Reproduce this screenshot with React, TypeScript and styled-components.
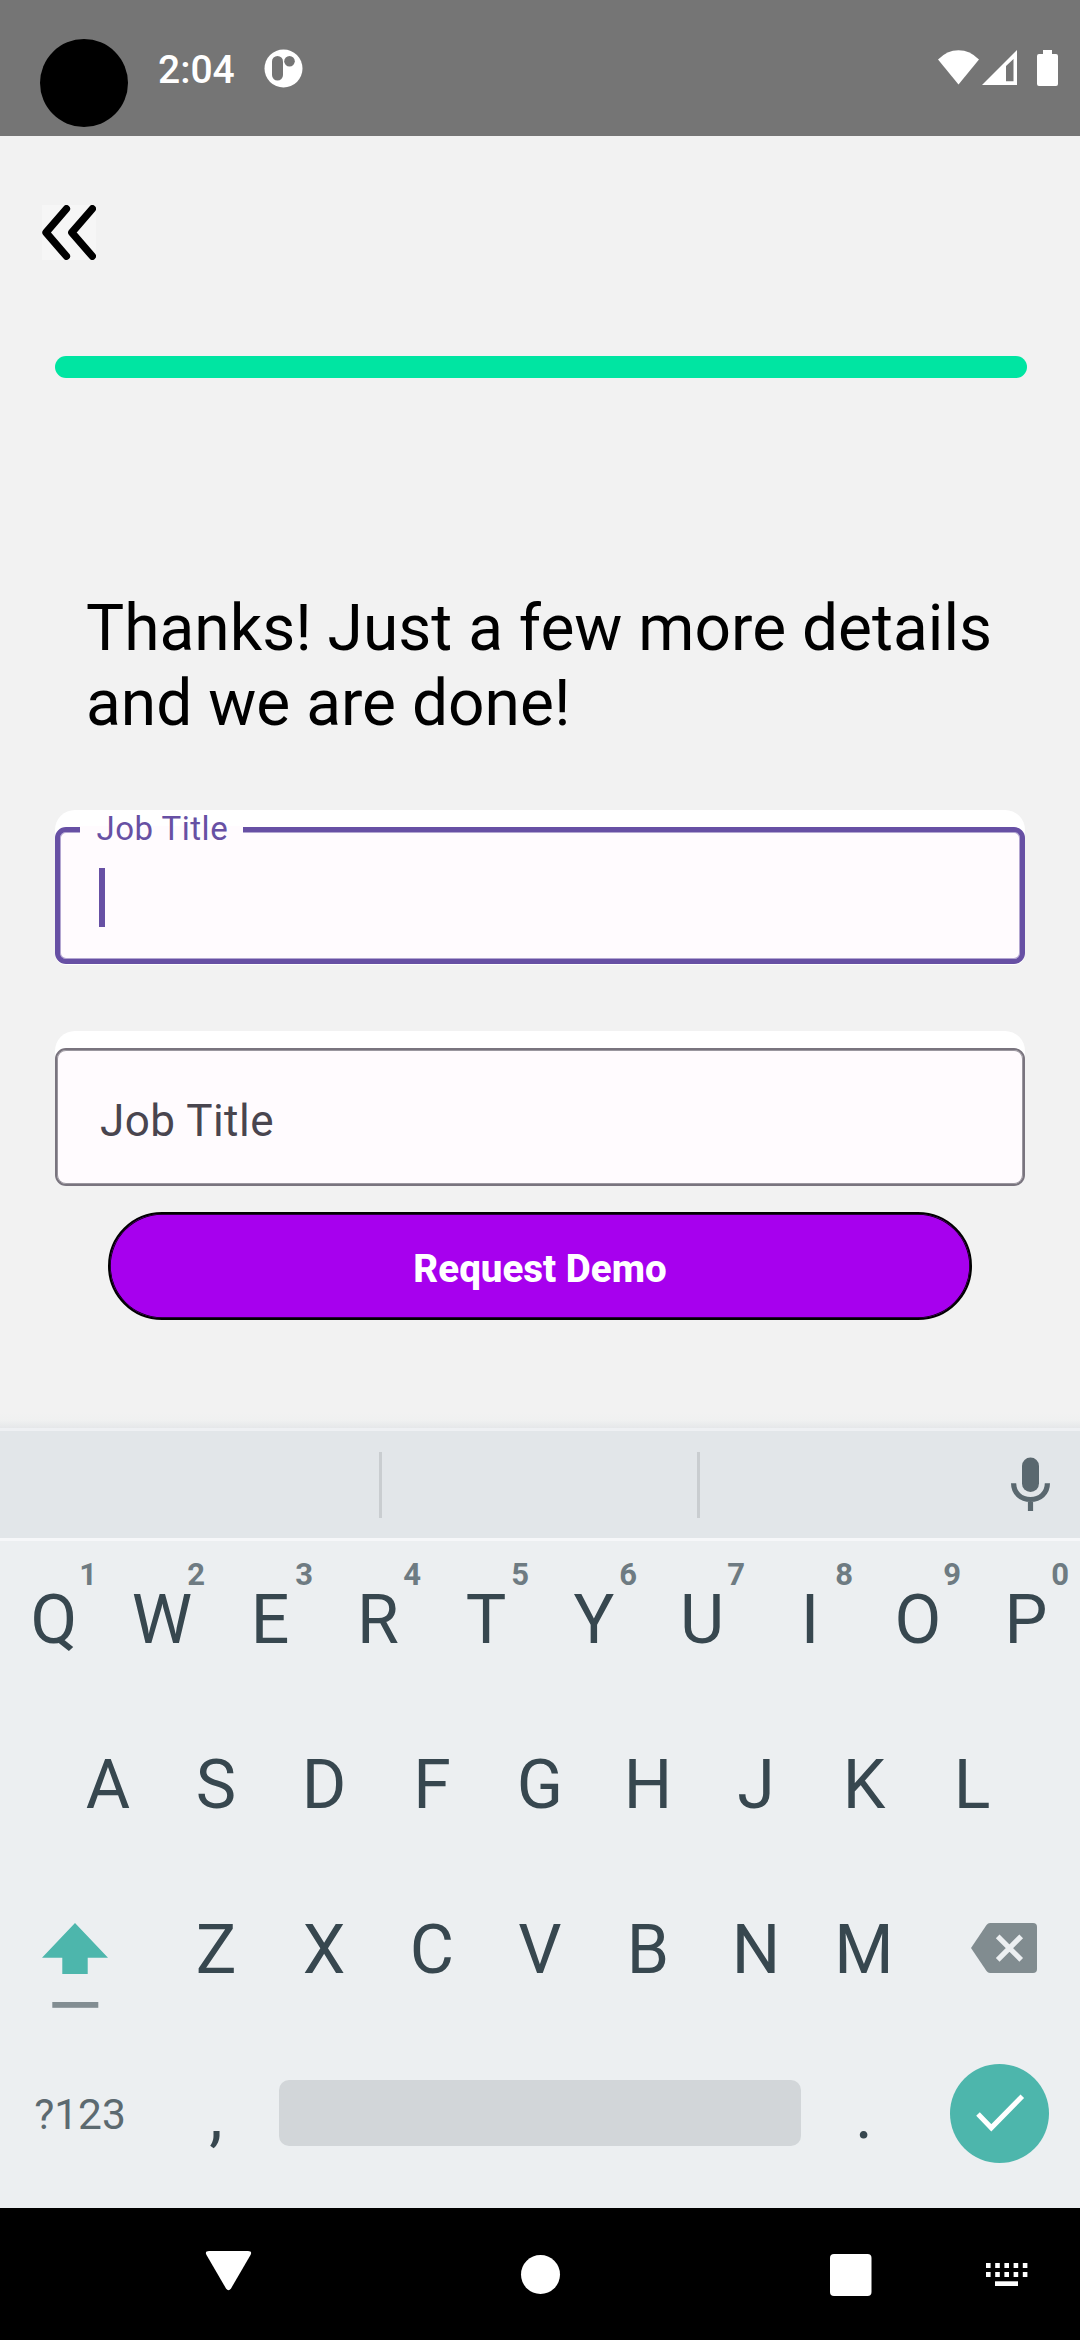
import React from "react";
import styled, { createGlobalStyle } from "styled-components";

const GlobalStyle = createGlobalStyle`
  *, *::before, *::after { box-sizing: border-box; }
  body { margin: 0; background: #f2f2f2; }
  svg { display: block; flex: none; }
`;

const Screen = styled.div`
  display: flex;
  flex-direction: column;
  width: 1080px;
  height: 2340px;
  overflow: hidden;
  background: #f2f2f2;
  color: #000;
  font-family: Roboto, "Noto Sans", sans-serif;
`;

const StatusBar = styled.header`
  display: flex;
  align-items: flex-start;
  height: 136px;
  padding: 39px 22px 0 40px;
  background: #757575;
`;

const Camera = styled.div`
  width: 88px;
  height: 88px;
  border-radius: 50%;
  background: #000;
`;

const Clock = styled.time`
  width: 77px;
  margin: 7px 0 0 30px;
  color: #fff;
  font-size: 39px;
  font-weight: 500;
  line-height: 48px;
  white-space: nowrap;
`;

const AppBadge = styled.svg`
  margin: 10px 0 0 29px;
`;

const StatusIcons = styled.div`
  display: flex;
  margin: 11px 0 0 auto;
`;

const Main = styled.main`
  display: flex;
  flex-direction: column;
  height: 1276px;
  padding: 69px 55px 0;
`;

const BackButton = styled.button`
  width: 54px;
  height: 55px;
  margin-left: -13px;
  padding: 0;
  border: 0;
  background: #f6f6f6;
`;

const Progress = styled.div`
  width: 972px;
  height: 22px;
  margin-top: 96px;
  border-radius: 11px;
  background: #00e5a2;
`;

const Heading = styled.h1`
  margin: 213px -20px 0 31px;
  font-size: 64px;
  font-weight: 400;
  line-height: 75px;
  letter-spacing: 0.02px;
`;

const Field = styled.label<{ $gap: number }>`
  display: block;
  position: relative;
  height: 155px;
  margin-top: ${(p) => p.$gap}px;
  padding-top: 17px;
  border-radius: 20px 20px 11px 11px;
  background: #fff;
`;

const Outline = styled.div<{ $focused?: boolean }>`
  display: flex;
  align-items: center;
  height: ${(p) => (p.$focused ? 137 : 138)}px;
  padding-left: ${(p) => (p.$focused ? 39 : 43)}px;
  border: ${(p) => (p.$focused ? "5px solid #6750a4" : "2px solid #79747e")};
  border-radius: 11px;
  background: #fffbfe;
  box-shadow: inset 0 0 0 1px ${(p) => (p.$focused ? "#b3a6d1" : "#9b979f")};
`;

const FloatingLabel = styled.span`
  position: absolute;
  top: 16px;
  left: 25px;
  width: 163px;
  height: 7px;
  padding-left: 16.500px;
  background: #fffbfe;
  color: #6750a4;
  font-size: 33px;
  line-height: 38px;
  letter-spacing: 0.5px;
  white-space: nowrap;

  span {
    display: block;
    margin-top: -16px;
  }
`;

const Caret = styled.div`
  width: 6px;
  height: 59px;
  margin-top: 4px;
  background: #6750a4;
`;

const Placeholder = styled.span`
  padding-top: 8px;
  color: #49454f;
  font-size: 44px;
  letter-spacing: 0.5px;
`;

const SubmitButton = styled.button`
  width: 864px;
  height: 108px;
  margin: 26px 0 0 53px;
  padding: 6px 0 0;
  border: 2px solid #000;
  border-radius: 54px;
  background: #a700ee;
  box-shadow: inset 0 0 0 0.75px #000;
  color: #fff;
  font: 800 38.5px/46px Roboto, sans-serif;
`;

const Keyboard = styled.section`
  display: flex;
  flex-direction: column;
  height: 796px;
  background: #eceff1;
`;

const Shade = styled.div`
  height: 16px;
  background: linear-gradient(#f2f2f2, #f0f1f1 50%, #e5e7e9);
`;

const Suggestions = styled.div`
  display: flex;
  align-items: center;
  height: 113px;
  border-top: 3px solid #eef0f3;
  border-bottom: 3px solid #f6f7f9;
  background: #e2e6e9;
`;

const Suggestion = styled.div<{ $width: number }>`
  width: ${(p) => p.$width}px;
  height: 66px;
  border-right: 3px solid #c9cdd0;
`;

const MicButton = styled.div`
  margin-left: 311px;
  padding-bottom: 2px;
`;

const KeyRow = styled.div`
  display: flex;
  justify-content: center;
  height: 165px;
  padding-bottom: 7px;
`;

const Key = styled.div<{ $wide?: boolean }>`
  position: relative;
  display: flex;
  align-items: center;
  justify-content: center;
  width: ${(p) => (p.$wide ? 162 : 108)}px;
  color: #37474f;
  font-size: 68px;
  line-height: 80px;
`;

const Hint = styled.sup`
  position: absolute;
  top: 16px;
  right: 11px;
  color: #6e7b82;
  font-size: 31px;
  font-weight: 700;
  line-height: 36px;
`;

const SymbolsKey = styled(Key)`
  padding: 0 2px 1px 0;
  color: #5c6a70;
  font-size: 42.5px;
`;

const PunctuationKey = styled(Key)`
  font-size: 68px;
`;

const SpaceBar = styled.div`
  width: 522px;
  height: 66px;
  margin: 44px 9px 0;
  border-radius: 10px;
  background: #d2d6d9;
`;

const EnterKey = styled(Key)`
  padding-bottom: 3px;
`;

const NavBar = styled.nav`
  height: 132px;
  background: #000;
`;

const HINTED = "QWERTYUIOP".split("").map((letter, i) => ({ letter, hint: (i + 1) % 10 }));

export default function App() {
  return (
    <>
      <GlobalStyle />
      <Screen>
        <StatusBar>
          <Camera />
          <Clock>2:04</Clock>
          <AppBadge width="39" height="39" viewBox="0 0 39 39">
            <circle cx="19.5" cy="19.5" r="19" fill="#fff" />
            <rect x="8" y="7" width="11" height="24.5" rx="5.5" fill="#757575" />
            <circle cx="25.5" cy="12.3" r="5.3" fill="#757575" />
          </AppBadge>
          <StatusIcons>
            <svg width="120" height="37" viewBox="938 50 120 37" fill="#fff">
              <path d="M938 59.5Q947 50.2 958.5 50.2T979 59.5L958.5 84.5Z" />
              <path fillRule="evenodd" d="M982 85L1017 50V85ZM1006 81.2H1013.5V59L1006 66Z" />
              <path d="M1043 50H1052V54H1056Q1058 54 1058 56V84Q1058 86 1056 86H1039Q1037 86 1037 84V56Q1037 54 1039 54H1043Z" />
            </svg>
          </StatusIcons>
        </StatusBar>

        <Main>
          <BackButton aria-label="Back">
            <svg width="54" height="55" viewBox="0 0 54 55" fill="none" stroke="#000" strokeWidth="7.4" strokeLinecap="round" strokeLinejoin="round">
              <path d="M24.4 3.8L4 27.5L24.4 51.2" />
              <path d="M50.3 3.8L29.8 27.5L50.3 51.2" />
            </svg>
          </BackButton>
          <Progress />
          <Heading>
            Thanks! Just a few more details
            <br />
            and we are done!
          </Heading>
          <Field $gap={69}>
            <Outline $focused>
              <Caret />
            </Outline>
            <FloatingLabel>
              <span>Job Title</span>
            </FloatingLabel>
          </Field>
          <Field $gap={66}>
            <Outline>
              <Placeholder>Job Title</Placeholder>
            </Outline>
          </Field>
          <SubmitButton>Request Demo</SubmitButton>
        </Main>

        <Keyboard>
          <Shade />
          <Suggestions>
            <Suggestion $width={382} />
            <Suggestion $width={318} />
            <MicButton>
              <svg width="39" height="54" viewBox="0 0 39 54">
                <rect x="11" y="0.5" width="17" height="34.5" rx="8.5" fill="#5a686f" />
                <path d="M2.6 26.3C2.6 36 10 42.5 19.5 42.5S36.4 36 36.4 26.3M19.5 42V54.5" fill="none" stroke="#5a686f" strokeWidth="5.2" />
              </svg>
            </MicButton>
          </Suggestions>
          <KeyRow>
            {HINTED.map(({ letter, hint }) => (
              <Key key={letter}>
                {letter}
                <Hint>{hint}</Hint>
              </Key>
            ))}
          </KeyRow>
          <KeyRow>
            {"ASDFGHJKL".split("").map((letter) => (
              <Key key={letter}>{letter}</Key>
            ))}
          </KeyRow>
          <KeyRow>
            <Key $wide>
              <svg width="162" height="120" viewBox="0 1890 162 120">
                <path d="M75 1923L108 1957.7H87.7V1974H62.3V1957.7H42Z" fill="#4db6ac" />
                <rect x="52.3" y="2002" width="46" height="5.8" fill="#828d92" />
              </svg>
            </Key>
            {"ZXCVBNM".split("").map((letter) => (
              <Key key={letter}>{letter}</Key>
            ))}
            <Key $wide>
              <svg width="162" height="120" viewBox="918 1890 162 120">
                <path d="M990 1923H1033Q1037 1923 1037 1927V1969Q1037 1973 1033 1973H990Q988 1973 986.5 1971L971 1948L986.5 1925Q988 1923 990 1923Z" fill="#818c90" />
                <path d="M997.7 1936.3L1021.2 1959.8M1021.2 1936.3L997.7 1959.8" stroke="#eceff1" strokeWidth="5.2" />
              </svg>
            </Key>
          </KeyRow>
          <KeyRow>
            <SymbolsKey $wide>?123</SymbolsKey>
            <PunctuationKey>,</PunctuationKey>
            <SpaceBar />
            <PunctuationKey>.</PunctuationKey>
            <EnterKey $wide>
              <svg width="99" height="99" viewBox="0 0 99 99">
                <circle cx="49.5" cy="49.5" r="49.5" fill="#4db6ac" />
                <path d="M28 50L41.3 63.8L72.3 32.2" fill="none" stroke="#fff" strokeWidth="5" />
              </svg>
            </EnterKey>
          </KeyRow>
        </Keyboard>

        <NavBar>
          <svg width="1080" height="132" viewBox="0 2208 1080 132" fill="#fff">
            <path d="M209 2251H248Q252.500 2251 250.500 2255L231 2288.500Q228.500 2292 226 2288.500L206.500 2255Q204.500 2251 209 2251Z" />
            <circle cx="540.5" cy="2274.500" r="19.500" />
            <rect x="830" y="2254" width="41.500" height="42" rx="4" />
            {[0, 1, 2, 3, 4].map((col) => (
              <React.Fragment key={col}>
                <rect x={986 + col * 9.2} y="2263" width="4.600" height="5" />
                <rect x={986 + col * 9.2} y="2272" width="4.600" height="5" />
              </React.Fragment>
            ))}
            <rect x="995" y="2281.300" width="23" height="4.700" />
          </svg>
        </NavBar>
      </Screen>
    </>
  );
}
